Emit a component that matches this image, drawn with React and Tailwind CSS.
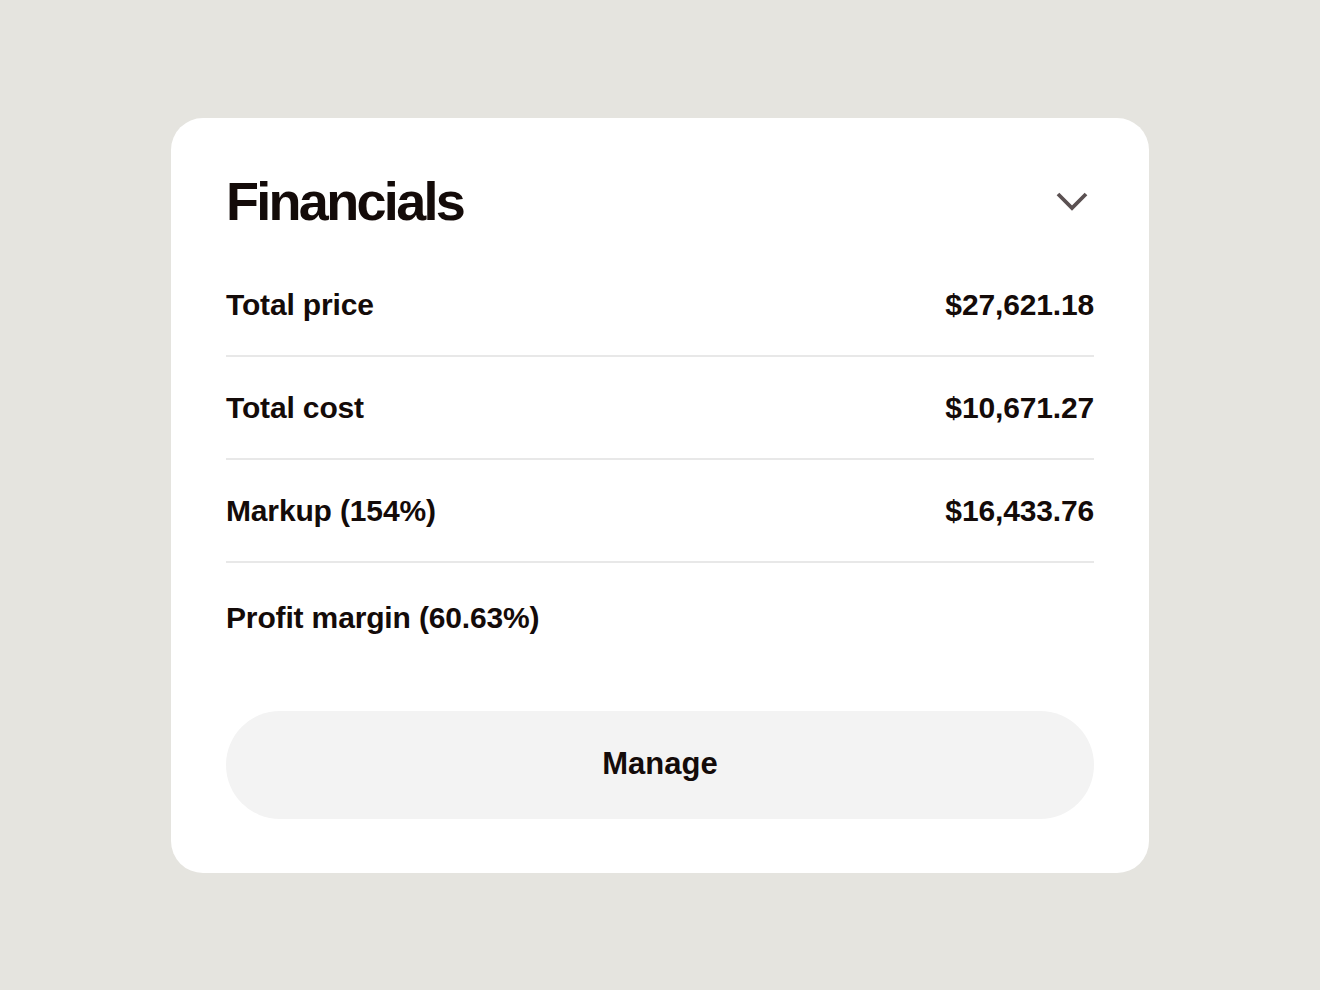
import React from "react";

const rows = [
  { label: "Total price", value: "$27,621.18" },
  { label: "Total cost", value: "$10,671.27" },
  { label: "Markup (154%)", value: "$16,433.76" },
];

function Chevron() {
  return (
    <svg width="34" height="22" viewBox="0 0 34 22" fill="none" aria-hidden="true">
      <path d="M3 4 L17 18 L31 4" stroke="#5b5152" strokeWidth="3.8" strokeLinecap="butt" strokeLinejoin="miter" />
    </svg>
  );
}

export default function App() {
  return (
    <div
      className="min-h-screen w-full flex items-center justify-center bg-[#e5e4df] text-[#140b09]"
      style={{ fontFamily: '"Liberation Sans", Arial, sans-serif' }}
    >
      <div className="w-[978px] h-[755px] bg-white rounded-[32px] px-[55px] pt-[54px] pb-[54px] flex flex-col">
        <div className="flex items-center justify-between h-[58px]">
          <h1 className="text-[54px] leading-none font-bold tracking-[-0.05em]">Financials</h1>
          <button className="w-[40px] h-[40px] flex items-center justify-center mr-[2px]">
            <Chevron />
          </button>
        </div>
        <div className="mt-[24px] flex flex-col">
          {rows.map((r) => (
            <div
              key={r.label}
              className="h-[103px] flex items-center justify-between border-b-2 border-[#e8e8e8] text-[30px] font-bold tracking-[-0.005em]"
            >
              <span>{r.label}</span>
              <span>{r.value}</span>
            </div>
          ))}
          <div className="h-[110px] flex items-center text-[30px] font-bold tracking-[-0.005em]">
            <span>Profit margin (60.63%)</span>
          </div>
        </div>
        <button className="mt-auto h-[108px] w-full rounded-full bg-[#f3f3f3] text-[31px] font-bold text-[#140b09]">
          Manage
        </button>
      </div>
    </div>
  );
}
